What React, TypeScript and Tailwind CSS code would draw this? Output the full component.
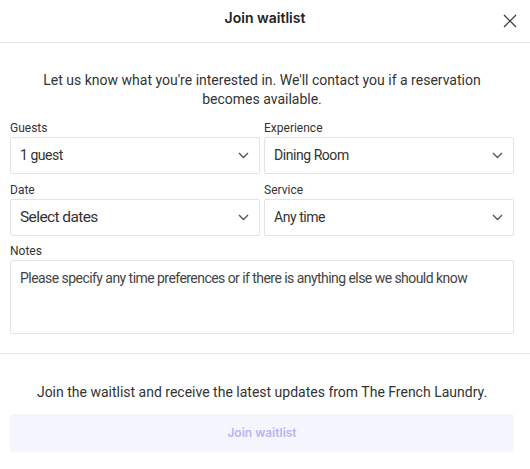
import React from "react";

const Chevron = () => (
  <svg width="11" height="7" viewBox="0 0 11 7" fill="none" className="shrink-0">
    <polyline points="1,1 5.5,5.5 10,1" stroke="#555" strokeWidth="1.4" />
  </svg>
);

interface SelectBoxProps {
  label: string;
  value: string;
  big?: boolean;
}

const SelectBox: React.FC<SelectBoxProps> = ({ label, value, big }) => (
  <div className="flex flex-col">
    <label className="text-[12px] leading-4 text-[#333] mb-px">{label}</label>
    <div className="h-[37px] border border-[#e3e3e3] rounded-[2px] flex items-center justify-between pl-[9px] pr-[10px]">
      <span
        className={
          big
            ? "text-[15.5px] tracking-[-0.6px] text-[#333]"
            : "text-[14px] tracking-[-0.45px] text-[#333]"
        }
      >
        {value}
      </span>
      <Chevron />
    </div>
  </div>
);

const App: React.FC = () => {
  return (
    <div className="w-[530px] h-[469px] bg-white font-['Roboto',sans-serif] text-[#333] overflow-hidden">
      <div className="h-[43px] border-b border-[#e5e5e5] flex items-center justify-center relative">
        <h2 className="text-[14px] font-semibold text-[#222] -mt-[8px] font-['Inter',sans-serif]">Join waitlist</h2>
        <button className="absolute right-[13px] top-[14px]">
          <svg width="14" height="14" viewBox="0 0 14 14" fill="none">
            <path d="M1 1L13 13M13 1L1 13" stroke="#333" strokeWidth="1.2" />
          </svg>
        </button>
      </div>

      <div className="pl-[10px] pr-[16px] pt-[28px] pb-[19px]">
        <p className="text-[14px] leading-[19px] text-center text-[#333] px-4">
          Let us know what you're interested in. We'll contact you if a reservation
          <br />
          becomes available.
        </p>

        <div className="grid grid-cols-2 gap-x-1 gap-y-2 mt-[11px]">
          <SelectBox label="Guests" value="1 guest" />
          <SelectBox label="Experience" value="Dining Room" />
          <SelectBox label="Date" value="Select dates" big />
          <SelectBox label="Service" value="Any time" />
        </div>

        <div className="mt-[7px] flex flex-col">
          <label className="text-[12px] leading-4 text-[#333] mb-px">Notes</label>
          <div className="h-[74px] border border-[#e3e3e3] rounded-[2px] px-[9px] pt-[5px]">
            <span className="text-[14px] tracking-[-0.55px] text-[#444] whitespace-nowrap">
              Please specify any time preferences or if there is anything else we should know
            </span>
          </div>
        </div>
      </div>

      <div className="border-t border-[#e5e5e5] pl-[10px] pr-[16px] pt-[28px]">
        <p className="text-[14px] leading-5 text-center text-[#333]">
          Join the waitlist and receive the latest updates from The French Laundry.
        </p>
        <button className="mt-3 w-full h-[38px] rounded-[3px] bg-[#f5f5fe] text-[12px] font-semibold text-[#b8b6f6] font-['Inter',sans-serif]">
          Join waitlist
        </button>
      </div>
    </div>
  );
};

export default App;
